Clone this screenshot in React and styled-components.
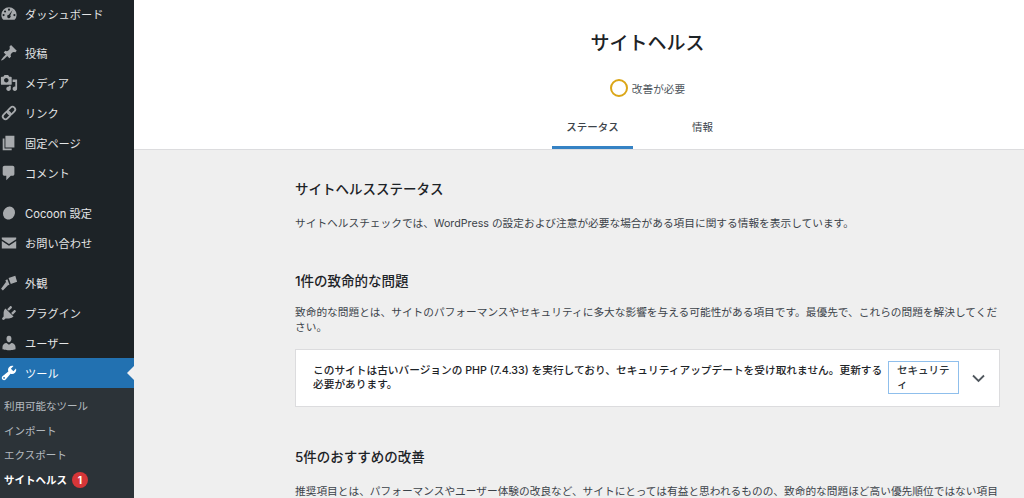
import React from 'react';
import styled, { createGlobalStyle } from 'styled-components';

const Global = createGlobalStyle`
  html, body { margin: 0; padding: 0; height: 100%; overflow: hidden; }
  body {
    background: #efefef;
    font-family: Inter, "Noto Sans CJK JP", sans-serif;
    color: #3c434a;
  }
`;

const Page = styled.div`
  display: flex;
  width: 1024px;
  height: 498px;
  overflow: hidden;
`;

const Sidebar = styled.nav`
  flex: 0 0 134px;
  background: #1d2327;
  display: flex;
  flex-direction: column;
`;

const MenuGroup = styled.div`
  display: flex;
  flex-direction: column;
  margin-top: ${(p) => p.$top || 0}px;
  margin-bottom: ${(p) => p.$gap || 0}px;
`;

const MenuItem = styled.div`
  position: relative;
  display: flex;
  align-items: center;
  height: 30px;
  padding-left: 25px;
  font-size: 11.2px;
  color: ${(p) => (p.$active ? '#fff' : '#e4e5e6')};
  background: ${(p) => (p.$active ? '#2271b1' : 'transparent')};
  white-space: nowrap;
`;

const IconSlot = styled.span`
  position: absolute;
  left: 0;
  top: 6px;
  width: 18px;
  height: 18px;
  color: ${(p) => (p.$active ? '#fff' : '#a7aaad')};
  svg { display: block; width: 18px; height: 18px; fill: currentColor; }
`;

const ActiveArrow = styled.span`
  position: absolute;
  right: 0;
  top: 8px;
  width: 0;
  height: 0;
  border-style: solid;
  border-width: 7px 7px 7px 0;
  border-color: transparent #f0f0f1 transparent transparent;
`;

const SubMenu = styled.div`
  flex: 1;
  background: #2c3338;
  padding-top: 5.500px;
  display: flex;
  flex-direction: column;
`;

const SubItem = styled.div`
  display: flex;
  align-items: center;
  gap: 5px;
  height: 24.600px;
  padding-left: 4px;
  font-size: 10.500px;
  color: ${(p) => (p.$current ? '#fff' : 'rgba(240,246,252,.7)')};
  font-weight: ${(p) => (p.$current ? 600 : 400)};
  white-space: nowrap;
`;

const Badge = styled.span`
  display: inline-flex;
  align-items: center;
  justify-content: center;
  width: 16px;
  height: 16px;
  border-radius: 50%;
  background: #d63638;
  color: #fff;
  font-size: 10px;
  font-weight: 700;
`;

const Main = styled.main`
  flex: 1;
  min-width: 0;
  display: flex;
  flex-direction: column;
`;

const Header = styled.header`
  flex: 0 0 150px;
  box-sizing: border-box;
  background: #fff;
  border-bottom: 1px solid #dcdcde;
  display: flex;
  flex-direction: column;
  align-items: center;
  padding-left: 137px;
`;

const Title = styled.h1`
  margin: 30px 0 0;
  font-size: 19px;
  line-height: 27px;
  font-weight: 500;
  color: #1d2327;
`;

const Progress = styled.div`
  display: flex;
  align-items: center;
  gap: 4px;
  margin-top: 21px;
  height: 20px;
  font-size: 10.700px;
  color: #50575e;
`;

const Ring = styled.span`
  width: 14px;
  height: 14px;
  border-radius: 50%;
  border: 2px solid #dba617;
`;

const Tabs = styled.div`
  display: flex;
  gap: 29px;
  margin-top: 11px;
`;

const Tab = styled.div`
  box-sizing: border-box;
  width: 81px;
  height: 40px;
  padding-top: 11px;
  text-align: center;
  font-size: 10.500px;
  line-height: 16px;
  font-weight: ${(p) => (p.$active ? 500 : 400)};
  color: #3c434a;
  border-bottom: 3px solid ${(p) => (p.$active ? '#3582c4' : 'transparent')};
`;

const Body = styled.section`
  box-sizing: border-box;
  width: 705px;
  margin-left: 161px;
  padding-top: 28px;
`;

const Heading = styled.h2`
  margin: ${(p) => p.$top || 0}px 0 0;
  font-size: 13.500px;
  line-height: 22px;
  font-weight: 500;
  color: #1d2327;
`;

const Text = styled.p`
  margin: ${(p) => p.$top || 0}px 0 0;
  font-size: 10.700px;
  line-height: 15px;
  color: #3c434a;
`;

const Issue = styled.div`
  box-sizing: border-box;
  display: flex;
  align-items: center;
  height: 58px;
  margin-top: 14px;
  padding: 0 14px 0 17px;
  background: #fff;
  border: 1px solid #dcdcde;
`;

const IssueText = styled.div`
  flex: 1;
  font-size: 10.700px;
  line-height: 14px;
  font-weight: 500;
  color: #1d2327;
`;

const Tag = styled.span`
  box-sizing: border-box;
  flex: 0 0 71px;
  height: 33px;
  margin: 0 0 2px 1px;
  padding: 2px 8px;
  border: 1px solid #8fbfec;
  font-size: 10.500px;
  line-height: 14px;
  font-weight: 500;
  color: #2c3338;
`;

const Chevron = styled.svg`
  flex: 0 0 13px;
  width: 13px;
  height: 9px;
  margin-left: 13px;
  fill: none;
  stroke: #50575e;
  stroke-width: 1.800;
`;

const LinkIcon = () => (
  <g transform="rotate(-45 10 10)" fill="none" stroke="currentColor" strokeWidth="2">
    <rect x="1.500" y="7" width="9.500" height="6" rx="3" />
    <rect x="9" y="7" width="9.500" height="6" rx="3" />
  </g>
);

const icons = {
  gauge: <path fillRule="evenodd" d="M3.800 16.500h12.400A8.400 8.400 0 0 0 18.500 11 8.500 8.500 0 0 0 1.500 11c0 2.100.9 4.100 2.300 5.500zM10 4a1.200 1.200 0 1 1 0 2.400A1.200 1.200 0 0 1 10 4zM5.600 6a1.200 1.200 0 1 1 0 2.400 1.200 1.200 0 0 1 0-2.400zM4 10a1.200 1.200 0 1 1 0 2.400A1.200 1.200 0 0 1 4 10zm10-4.500-2.600 6a1.900 1.900 0 1 1-1.600-.7zM16 10a1.200 1.200 0 1 1 0 2.400 1.200 1.200 0 0 1 0-2.400z" />,
  pin: <path d="M10.440 3.020l1.820-1.820 6.360 6.350-1.830 1.820c-1.050-.68-2.480-.57-3.410.36l-.75.75c-.92.93-1.040 2.350-.35 3.410l-1.830 1.820-2.410-2.410-2.800 2.790c-.42.42-3.380 2.710-3.800 2.290s1.860-3.390 2.280-3.810l2.790-2.790L4.100 9.360l1.830-1.820c1.050.69 2.480.57 3.400-.36l.75-.75c.93-.92 1.050-2.350.36-3.410z" />,
  media: <path d="M13 11V4c0-.55-.45-1-1-1h-1.670L9 1H5L3.670 3H2c-.55 0-1 .45-1 1v7c0 .55.45 1 1 1h10c.55 0 1-.45 1-1zM7 4.500c1.380 0 2.500 1.120 2.500 2.500S8.380 9.500 7 9.500 4.500 8.380 4.500 7 5.620 4.500 7 4.500zM14 6h5v10.500c0 1.380-1.120 2.500-2.500 2.500S14 17.880 14 16.500s1.120-2.500 2.500-2.500c.17 0 .34.020.5.050V9h-3V6zm-4 8.050V13h2v3.500c0 1.380-1.120 2.500-2.500 2.500S7 17.880 7 16.500 8.120 14 9.500 14c.17 0 .34.020.5.050z" />,
  link: <LinkIcon />,
  pages: <path d="M6 15V2h10v13H6zm-1 1h8v2H3V5h2v11z" />,
  comment: <path d="M5 2h9c1.100 0 2 .9 2 2v7c0 1.100-.9 2-2 2h-2l-5 5v-5H5c-1.100 0-2-.9-2-2V4c0-1.100.9-2 2-2z" />,
  circle: <ellipse cx="10" cy="10" rx="6.500" ry="7.500" transform="rotate(25 10 10)" />,
  mail: <path d="M2 4h16v1.800l-8 5.200-8-5.200zM2 7.800l8 5.200 8-5.200V16H2z" />,
  brush: <path d="M9.500 4.500 17 2l2 6.500-7 2.500zM8.200 5.800l2.300 6.200-2.300.8-2.200-5.800zM6.600 8.800l2 4L3.200 18.300l-2-1.800z" />,
  plugin: <path d="M13.110 4.360L9.870 7.600 8 5.730l3.240-3.240c.35-.34 1.050-.2 1.560.32.520.51.660 1.210.31 1.550zm-8 1.770l.91-1.120 9.010 9.010-1.190.84c-.71.710-2.630 1.160-3.820 1.160H6.140L4.900 17.260c-.59.590-1.540.59-2.120 0-.59-.580-.59-1.530 0-2.120l1.240-1.240v-3.880c0-1.130.4-3.100 1.090-3.890zm7.260 3.970l3.240-3.240c.34-.35 1.040-.21 1.550.31.520.51.660 1.210.31 1.550l-3.240 3.250z" />,
  user: <path d="M10 9.250c-2.270 0-2.730-3.440-2.730-3.440C7 4.020 7.820 2 9.970 2c2.160 0 2.980 2.020 2.710 3.810 0 0-.41 3.440-2.680 3.440zm0 2.570L12.720 10c2.390 0 4.520 2.330 4.520 4.530v2.490s-3.650 1.130-7.240 1.130c-3.650 0-7.240-1.130-7.240-1.130v-2.490c0-2.250 1.940-4.480 4.470-4.480z" />,
  wrench: <path d="M16.680 9.770c-1.340 1.340-3.300 1.670-4.950.99l-5.410 6.520c-.99.990-2.590.99-3.570 0-.99-.98-.99-2.580 0-3.570l6.520-5.420c-.68-1.650-.35-3.610.99-4.950 1.280-1.280 3.120-1.620 4.720-1.060l-2.890 2.890 2.820 2.820 2.860-2.870c.53 1.580.18 3.400-1.090 4.650zM3.810 16.210c.4.390 1.030.39 1.420 0 .4-.4.400-1.030 0-1.430-.39-.39-1.020-.39-1.420 0-.39.400-.39 1.030 0 1.430z" />,
};

const Icon = ({ name, active }) => (
  <IconSlot $active={active}>
    <svg viewBox="0 0 20 20">{icons[name]}</svg>
  </IconSlot>
);

const menu = [
  { top: -1, gap: 9, items: [['gauge', 'ダッシュボード']] },
  { gap: 10, items: [['pin', '投稿'], ['media', 'メディア'], ['link', 'リンク'], ['pages', '固定ページ'], ['comment', 'コメント']] },
  { gap: 10, items: [['circle', 'Cocoon 設定'], ['mail', 'お問い合わせ']] },
  { gap: 0, items: [['brush', '外観'], ['plugin', 'プラグイン'], ['user', 'ユーザー']] },
];

export default function App() {
  return (
    <>
      <Global />
      <Page>
        <Sidebar>
          {menu.map((group, i) => (
            <MenuGroup key={i} $top={group.top} $gap={group.gap}>
              {group.items.map(([icon, label]) => (
                <MenuItem key={label}>
                  <Icon name={icon} />
                  {label}
                </MenuItem>
              ))}
            </MenuGroup>
          ))}
          <MenuItem $active>
            <Icon name="wrench" active />
            ツール
            <ActiveArrow />
          </MenuItem>
          <SubMenu>
            <SubItem>利用可能なツール</SubItem>
            <SubItem>インポート</SubItem>
            <SubItem>エクスポート</SubItem>
            <SubItem $current>
              サイトヘルス <Badge>1</Badge>
            </SubItem>
          </SubMenu>
        </Sidebar>
        <Main>
          <Header>
            <Title>サイトヘルス</Title>
            <Progress>
              <Ring />
              改善が必要
            </Progress>
            <Tabs>
              <Tab $active>ステータス</Tab>
              <Tab>情報</Tab>
            </Tabs>
          </Header>
          <Body>
            <Heading>サイトヘルスステータス</Heading>
            <Text $top={16}>サイトヘルスチェックでは、WordPress の設定および注意が必要な場合がある項目に関する情報を表示しています。</Text>
            <Heading $top={39}>1件の致命的な問題</Heading>
            <Text $top={13}>致命的な問題とは、サイトのパフォーマンスやセキュリティに多大な影響を与える可能性がある項目です。最優先で、これらの問題を解決してください。</Text>
            <Issue>
              <IssueText>このサイトは古いバージョンの PHP (7.4.33) を実行しており、セキュリティアップデートを受け取れません。更新する<br />必要があります。</IssueText>
              <Tag>セキュリティ</Tag>
              <Chevron viewBox="0 0 13 9"><path d="M1 1.500l5.500 5.500 5.500-5.500" /></Chevron>
            </Issue>
            <Heading $top={39}>5件のおすすめの改善</Heading>
            <Text $top={16}>推奨項目とは、パフォーマンスやユーザー体験の改良など、サイトにとっては有益と思われるものの、致命的な問題ほど高い優先順位ではない項目です。</Text>
          </Body>
        </Main>
      </Page>
    </>
  );
}
